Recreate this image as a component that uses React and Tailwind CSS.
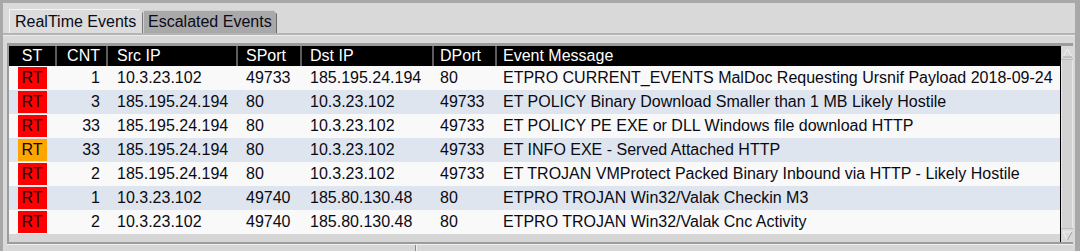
import React from "react";

const rows = [
  ["r", "1", "10.3.23.102", "49733", "185.195.24.194", "80", "ETPRO CURRENT_EVENTS MalDoc Requesting Ursnif Payload 2018-09-24"],
  ["r", "3", "185.195.24.194", "80", "10.3.23.102", "49733", "ET POLICY Binary Download Smaller than 1 MB Likely Hostile"],
  ["r", "33", "185.195.24.194", "80", "10.3.23.102", "49733", "ET POLICY PE EXE or DLL Windows file download HTTP"],
  ["o", "33", "185.195.24.194", "80", "10.3.23.102", "49733", "ET INFO EXE - Served Attached HTTP"],
  ["r", "2", "185.195.24.194", "80", "10.3.23.102", "49733", "ET TROJAN VMProtect Packed Binary Inbound via HTTP - Likely Hostile"],
  ["r", "1", "10.3.23.102", "49740", "185.80.130.48", "80", "ETPRO TROJAN Win32/Valak Checkin M3"],
  ["r", "2", "10.3.23.102", "49740", "185.80.130.48", "80", "ETPRO TROJAN Win32/Valak Cnc Activity"],
];

export default function App() {
  return (
    <div
      className="w-[1080px] h-[251px] overflow-hidden bg-[#a8a8a8] pt-[3px] pl-[3px] pr-[5px] flex flex-col"
      style={{ fontFamily: '"Liberation Sans", Arial, sans-serif' }}
    >
      {/* Tab bar */}
      <div className="h-[30px] bg-[#d9d9d9] flex items-end pl-[6px] shrink-0">
        <div className="w-[134px] h-[24px] bg-[#dcdcdc] border-t border-l border-[#f4f4f4] border-r border-r-[#7a7a7a] flex items-center pl-[5px] text-[16px] text-[#0b0b1a] [clip-path:polygon(0_0,calc(100%-4px)_0,100%_4px,100%_100%,0_100%)]">
          RealTime Events
        </div>
        <div className="w-[134px] h-[23px] bg-[#a9a9a9] border-t border-l border-[#d0d0d0] border-r border-r-[#6a6a6a] flex items-center pl-[4px] text-[16px] text-[#0b0b1a] [clip-path:polygon(0_0,calc(100%-4px)_0,100%_4px,100%_100%,0_100%)]">
          Escalated Events
        </div>
      </div>
      <div className="h-[2px] bg-[#b4b4b4] shrink-0" />
      <div className="h-px bg-[#ececec] shrink-0" />
      {/* Content panel */}
      <div className="flex-1 bg-[#d9d9d9] pl-[4px] pr-[2px] pt-[7px] flex flex-col min-h-0">
        <div className="flex border-t-[3px] border-l-2 border-b-2 border-[#9c9c9c] h-[201px] shrink-0">
          <div className="flex-1 flex flex-col bg-[#d6d6d6] text-[16px]">
            {/* header */}
            <div className="h-[20px] bg-black text-white flex items-center leading-none">
              <div className="w-[46px] text-center">ST</div>
              <div className="w-[51px] h-full border-l-2 border-[#5c5c5c] flex items-center justify-end pr-[6px]">CNT</div>
              <div className="w-[130px] h-full border-l-2 border-[#5c5c5c] flex items-center pl-[9px]">Src IP</div>
              <div className="w-[64px] h-full border-l-2 border-[#5c5c5c] flex items-center pl-[8px]">SPort</div>
              <div className="w-[132px] h-full border-l-2 border-[#5c5c5c] flex items-center pl-[8px]">Dst IP</div>
              <div className="w-[63px] h-full border-l-2 border-[#5c5c5c] flex items-center pl-[6px]">DPort</div>
              <div className="flex-1 h-full border-l-2 border-[#5c5c5c] flex items-center pl-[6px]">Event Message</div>
            </div>
            {rows.map((r, i) => (
              <div
                key={i}
                className={`h-[24px] flex items-center text-[#0a0a14] whitespace-nowrap ${i % 2 === 1 ? "bg-[#dee5ee]" : "bg-[#f9f9f9]"}`}
              >
                <div className="w-[46px] flex justify-center">
                  <div className={`w-[29px] h-[22px] flex items-center justify-center ${r[0] === "o" ? "bg-[#ffa500]" : "bg-[#ff0000]"}`}>
                    RT
                  </div>
                </div>
                <div className="w-[51px] text-right pr-[6px] pl-[2px]">{r[1]}</div>
                <div className="w-[130px] pl-[11px]">{r[2]}</div>
                <div className="w-[64px] pl-[10px]">{r[3]}</div>
                <div className="w-[132px] pl-[10px]">{r[4]}</div>
                <div className="w-[63px] pl-[8px]">{r[5]}</div>
                <div className="flex-1 pl-[8px] overflow-hidden">{r[6]}</div>
              </div>
            ))}
          </div>
          {/* vertical scrollbar */}
          <div className="w-[13px] border-l border-black bg-[#d2d2d2] flex flex-col justify-between">
            <div className="h-[14px] border-b border-[#bcbcbc] bg-[#d9d9d9] flex items-center justify-center">
              <svg width="11" height="10" viewBox="0 0 11 10">
                <path d="M5.5 1 L10 9 L1 9 Z" fill="#d9d9d9" stroke="#f2f2f2" strokeWidth="1" />
                <path d="M10 9 L1 9" stroke="#9a9a9a" strokeWidth="1" />
              </svg>
            </div>
            <div className="flex-1 border-x border-[#e8e8e8]" />
            <div className="h-[14px] border-t border-[#bcbcbc] bg-[#d9d9d9] flex items-center justify-center">
              <svg width="11" height="10" viewBox="0 0 11 10">
                <path d="M1 1 L10 1 L5.5 9 Z" fill="#d9d9d9" stroke="#f2f2f2" strokeWidth="1" />
                <path d="M10 1 L5.5 9" stroke="#9a9a9a" strokeWidth="1" />
              </svg>
            </div>
          </div>
        </div>
        {/* bottom panel */}
        <div className="flex-1 flex bg-[#d6d6d6] border-t border-[#f0f0f0]">
          <div className="w-[409px] border-r border-[#8c8c8c]" />
          <div className="w-px bg-[#f0f0f0]" />
          <div className="flex-1" />
        </div>
      </div>
    </div>
  );
}
